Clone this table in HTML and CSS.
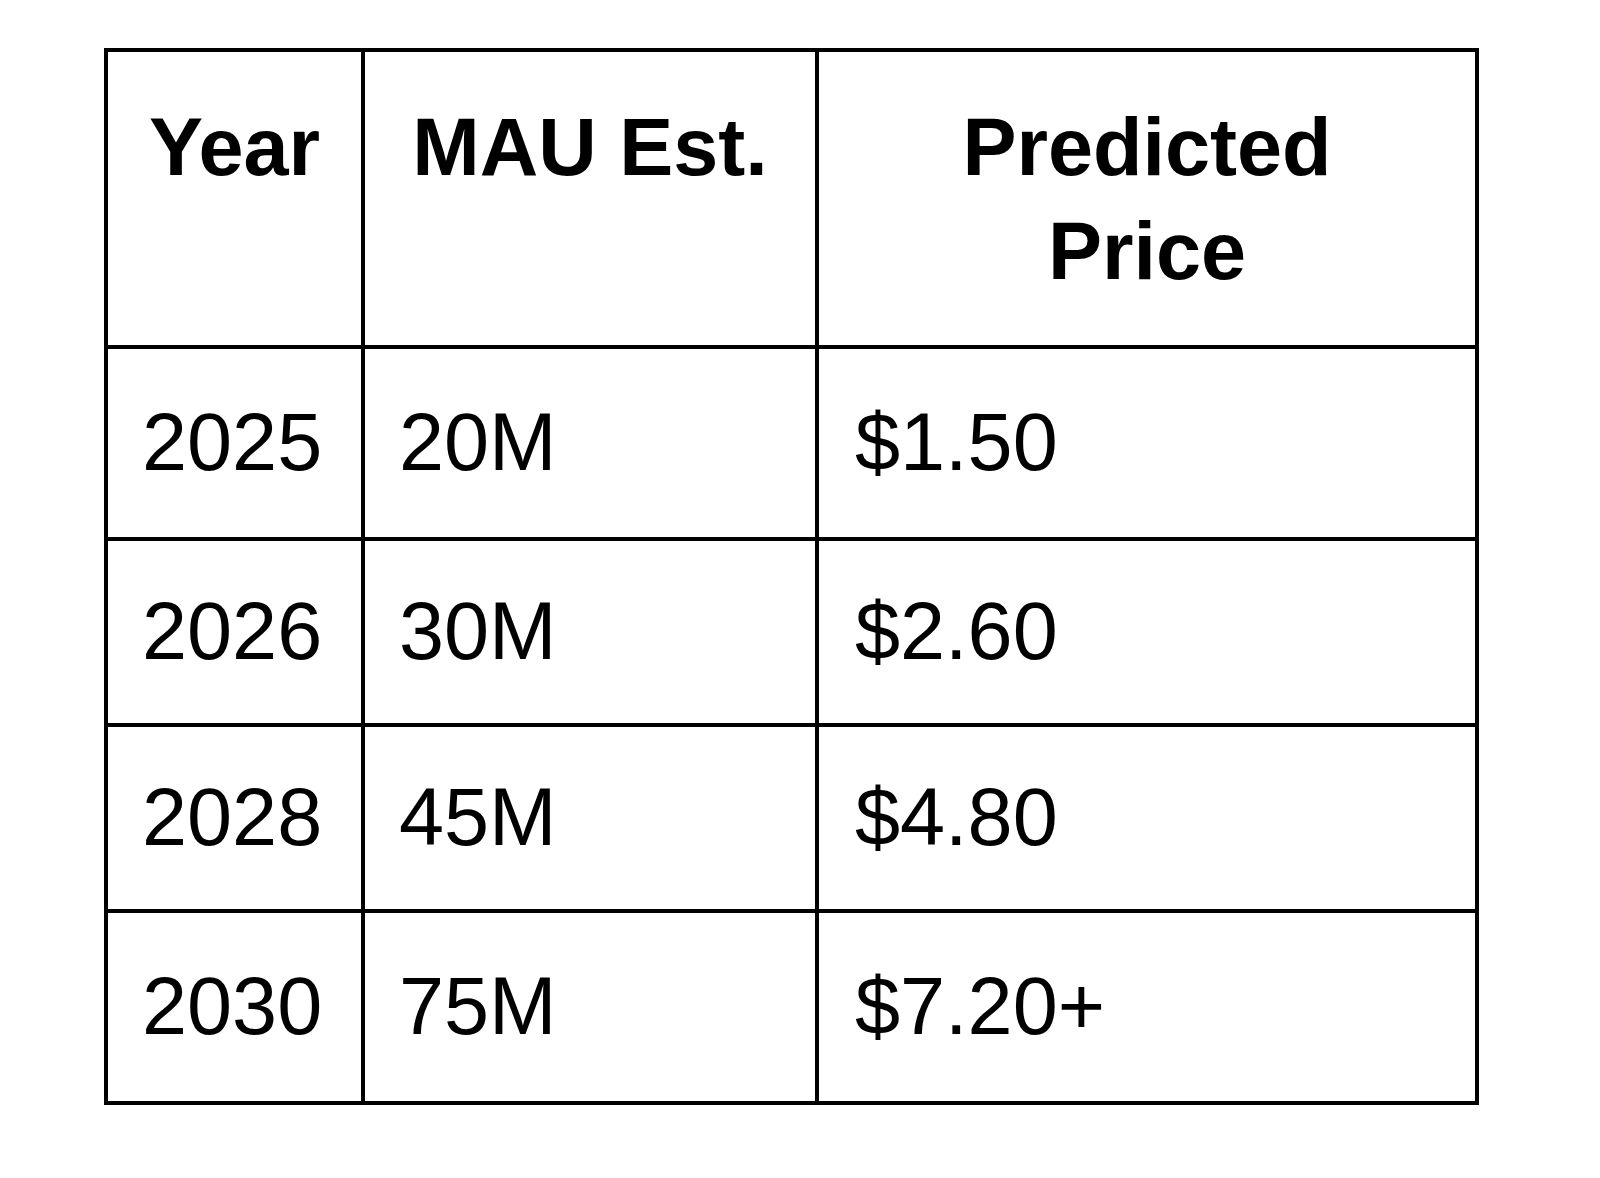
FILE: index.html
```html
<!DOCTYPE html>
<html lang="en">
<head>
<meta charset="utf-8">
<title>MAU and Price Forecast</title>
<link rel="stylesheet" href="styles.css">
</head>
<body>
<table class="forecast">
  <colgroup>
    <col class="col-year">
    <col class="col-mau">
    <col class="col-price">
  </colgroup>
  <thead>
    <tr>
      <th class="first">Year</th>
      <th>MAU Est.</th>
      <th>Predicted<br>Price</th>
    </tr>
  </thead>
  <tbody>
    <tr class="row-tall"><td class="first">2025</td><td>20M</td><td class="price">$1.50</td></tr>
    <tr><td class="first">2026</td><td>30M</td><td class="price">$2.60</td></tr>
    <tr><td class="first">2028</td><td>45M</td><td class="price">$4.80</td></tr>
    <tr class="row-tall"><td class="first">2030</td><td>75M</td><td class="price">$7.20+</td></tr>
  </tbody>
</table>
</body>
</html>
```
FILE: styles.css
```css
html, body {
  margin: 0;
  padding: 0;
  background: #ffffff;
}

body {
  padding: 48px 0 0 104px;
  font-family: "Liberation Sans", Arial, sans-serif;
  color: #000000;
}

.forecast {
  border-collapse: separate;
  border-spacing: 0;
  table-layout: fixed;
  width: 1375px;
  font-size: 81px;
  line-height: 104px;
}

.col-year { width: 261px; }
.col-mau { width: 454px; }
.col-price { width: 660px; }

.forecast th,
.forecast td {
  box-sizing: border-box;
  border-right: 4px solid #000;
  border-bottom: 4px solid #000;
  padding: 0 34px;
  white-space: nowrap;
}

.forecast th.first,
.forecast td.first {
  border-left: 4px solid #000;
}

.forecast th {
  border-top: 4px solid #000;
  font-weight: bold;
  text-align: center;
  vertical-align: top;
  padding-top: 43px;
  padding-bottom: 42px;
  padding-left: 32px;
  padding-right: 32px;
}

.forecast td {
  font-weight: normal;
  text-align: left;
  vertical-align: top;
  padding-top: 38px;
  padding-bottom: 40px;
}

.forecast td.price {
  padding-left: 36px;
}

.forecast .row-tall td {
  padding-top: 41px;
  padding-bottom: 43px;
}
```
